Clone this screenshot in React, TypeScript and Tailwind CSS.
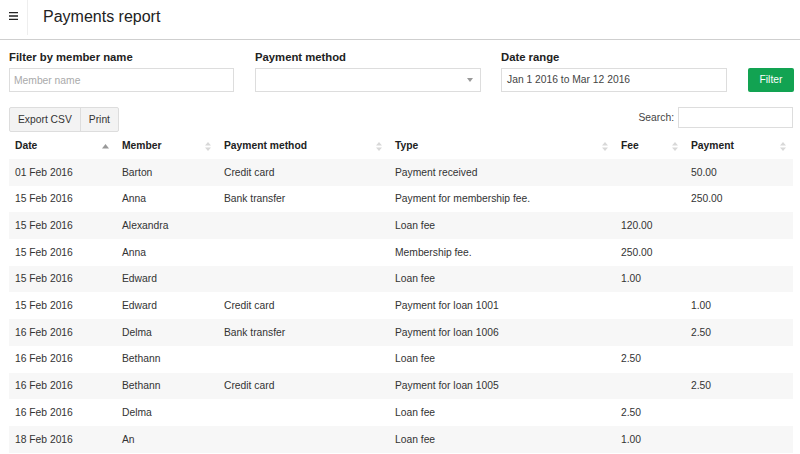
type Row = { date: string; member: string; method: string; type: string; fee: string; payment: string };

const rows: Row[] = [
  { date: '01 Feb 2016', member: 'Barton', method: 'Credit card', type: 'Payment received', fee: '', payment: '50.00' },
  { date: '15 Feb 2016', member: 'Anna', method: 'Bank transfer', type: 'Payment for membership fee.', fee: '', payment: '250.00' },
  { date: '15 Feb 2016', member: 'Alexandra', method: '', type: 'Loan fee', fee: '120.00', payment: '' },
  { date: '15 Feb 2016', member: 'Anna', method: '', type: 'Membership fee.', fee: '250.00', payment: '' },
  { date: '15 Feb 2016', member: 'Edward', method: '', type: 'Loan fee', fee: '1.00', payment: '' },
  { date: '15 Feb 2016', member: 'Edward', method: 'Credit card', type: 'Payment for loan 1001', fee: '', payment: '1.00' },
  { date: '16 Feb 2016', member: 'Delma', method: 'Bank transfer', type: 'Payment for loan 1006', fee: '', payment: '2.50' },
  { date: '16 Feb 2016', member: 'Bethann', method: '', type: 'Loan fee', fee: '2.50', payment: '' },
  { date: '16 Feb 2016', member: 'Bethann', method: 'Credit card', type: 'Payment for loan 1005', fee: '', payment: '2.50' },
  { date: '16 Feb 2016', member: 'Delma', method: '', type: 'Loan fee', fee: '2.50', payment: '' },
  { date: '18 Feb 2016', member: 'An', method: '', type: 'Loan fee', fee: '1.00', payment: '' },
];

const SortBoth = () => (
  <svg width="6" height="9" viewBox="0 0 6 9" className="text-[#d8d8d8]">
    <path d="M3 0 L6 3.5 H0 Z M3 9 L0 5.5 H6 Z" fill="currentColor" />
  </svg>
);

const SortAsc = () => (
  <svg width="7" height="5" viewBox="0 0 7 5" className="text-[#999]">
    <path d="M3.5 0 L7 4.5 H0 Z" fill="currentColor" />
  </svg>
);

const cols = [
  { label: 'Date', w: 'w-[107px]', asc: true },
  { label: 'Member', w: 'w-[102px]' },
  { label: 'Payment method', w: 'w-[171px]' },
  { label: 'Type', w: 'w-[226px]' },
  { label: 'Fee', w: 'w-[70px]' },
  { label: 'Payment', w: 'w-[108px]' },
];

export default function App() {
  return (
    <div className="w-[800px] h-[454px] overflow-hidden bg-white text-[#333] font-['Liberation_Sans',Arial,sans-serif] text-[10.3px]">
      <header className="h-[40px] flex items-stretch border-b border-[#cfcfcf]">
        <div className="w-[28px] shrink-0 flex items-center justify-center pb-[4px] border-r border-[#eee] mb-[4px]">
          <svg width="9" height="8" viewBox="0 0 9 8"><path d="M0 0.5H9M0 4H9M0 7.5H9" stroke="#222" strokeWidth="1.5" /></svg>
        </div>
        <h1 className="pl-[15px] flex items-center pb-[5px] text-[16px] text-[#222]">Payments report</h1>
      </header>

      <div className="px-[9px] pt-[10px] flex">
        <div className="w-[246px] shrink-0">
          <label className="block font-bold text-[11.3px] text-[#222] leading-[14px]">Filter by member name</label>
          <input placeholder="Member name" className="mt-[4px] w-[225px] h-[24px] border border-[#ddd] px-[4px] text-[10.3px] placeholder:text-[#aaa] outline-none" />
        </div>
        <div className="w-[246px] shrink-0">
          <label className="block font-bold text-[11.3px] text-[#222] leading-[14px]">Payment method</label>
          <div className="mt-[4px] w-[226px] h-[24px] border border-[#ddd] flex items-center justify-end pr-[7px]">
            <span className="w-0 h-0 border-l-[3px] border-r-[3px] border-t-[4px] border-l-transparent border-r-transparent border-t-[#999]" />
          </div>
        </div>
        <div className="w-[247px] shrink-0">
          <label className="block font-bold text-[11.3px] text-[#222] leading-[14px]">Date range</label>
          <div className="mt-[4px] w-[226px] h-[24px] border border-[#ddd] flex items-center px-[5px] text-[10.3px] text-[#444]">Jan 1 2016 to Mar 12 2016</div>
        </div>
        <div className="pt-[18px] shrink-0">
          <button className="w-[46px] h-[24px] bg-[#12a352] text-white text-[10.3px] rounded-[2px]">Filter</button>
        </div>
      </div>

      <div className="pl-[9px] pr-[7px] mt-[15px] flex items-start justify-between">
        <div className="flex border border-[#ddd] rounded-[2px] bg-[#f3f3f3] h-[25px]">
          <button className="px-[8px] text-[10.3px] text-[#333] border-r border-[#ddd]">Export CSV</button>
          <button className="px-[8px] text-[10.3px] text-[#333]">Print</button>
        </div>
        <div className="flex items-center">
          <span className="text-[10.3px] text-[#444] mr-[4px]">Search:</span>
          <input className="w-[115px] h-[21px] border border-[#ddd] outline-none" />
        </div>
      </div>

      <table className="ml-[9px] mt-[3px] border-collapse table-fixed w-[784px]">
        <thead>
          <tr className="h-[24px]">
            {cols.map(c => (
              <th key={c.label} className={`${c.w} text-left font-bold text-[10.3px] text-[#222] pl-[6px] pr-[7px] pb-[2px]`}>
                <div className="flex items-center justify-between">
                  <span>{c.label}</span>
                  {c.asc ? <SortAsc /> : <SortBoth />}
                </div>
              </th>
            ))}
          </tr>
        </thead>
        <tbody>
          {rows.map((r, i) => (
            <tr key={i} className={`h-[26.7px] ${i % 2 === 0 ? 'bg-[#f7f7f7]' : 'bg-white'}`}>
              <td className="pl-[6px]">{r.date}</td>
              <td className="pl-[6px]">{r.member}</td>
              <td className="pl-[6px]">{r.method}</td>
              <td className="pl-[6px]">{r.type}</td>
              <td className="pl-[6px]">{r.fee}</td>
              <td className="pl-[6px]">{r.payment}</td>
            </tr>
          ))}
        </tbody>
      </table>
    </div>
  );
}
